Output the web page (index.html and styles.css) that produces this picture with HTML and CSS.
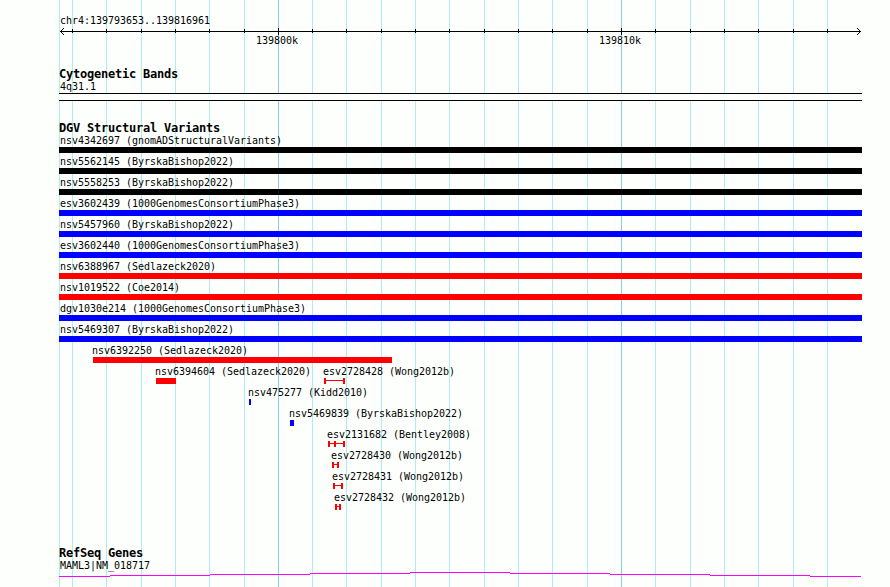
FILE: index.html
```
<!DOCTYPE html>
<html lang="en">
<head>
  <meta charset="utf-8">
  <meta name="viewport" content="width=device-width, initial-scale=1">
  <title>chr4:139793653..139816961</title>
  <link rel="stylesheet" href="styles.css">
</head>
<body>
  <div class="browser">
    <!-- grid lines, one per 1k -->
    <svg class="gridlines" width="803" height="587" shape-rendering="crispEdges">
      <path class="minor" d="M.5 0v587M13.5 0v587M47.5 0v587M82.5 0v587M116.5 0v587M150.5 0v587M185.5 0v587M253.5 0v587M287.5 0v587M322.5 0v587M356.5 0v587M390.5 0v587M425.5 0v587M459.5 0v587M493.5 0v587M528.5 0v587M596.5 0v587M631.5 0v587M665.5 0v587M699.5 0v587M734.5 0v587M768.5 0v587"/>
      <path class="major" d="M219.5 0v587M562.5 0v587"/>
    </svg>

    <div class="ruler">
      <div class="label">chr4:139793653..139816961</div>
      <svg class="axis" width="803" height="8" shape-rendering="crispEdges">
        <path d="M1 4.5h801"/>
        <path d="M13.5 2v4M47.5 2v4M82.5 2v4M116.5 2v4M150.5 2v4M185.5 2v4M253.5 2v4M287.5 2v4M322.5 2v4M356.5 2v4M390.5 2v4M425.5 2v4M459.5 2v4M493.5 2v4M528.5 2v4M596.5 2v4M631.5 2v4M665.5 2v4M699.5 2v4M734.5 2v4M768.5 2v4"/>
        <path d="M219.5 1v7M562.5 1v7"/>
        <path d="M2 3.5h1M3 2.5h1M4 1.5h1M2 5.5h1M3 6.5h1M4 7.5h1"/>
        <path d="M800 3.5h1M799 2.5h1M798 1.5h1M800 5.5h1M799 6.5h1M798 7.5h1"/>
      </svg>
      <div class="lane">
        <div class="feature" style="--start: 196"><div class="label">139800k</div></div>
        <div class="feature" style="--start: 539"><div class="label">139810k</div></div>
      </div>
    </div>

    <section class="track cytobands">
      <h2>Cytogenetic Bands</h2>
      <div class="label">4q31.1</div>
      <div class="band"></div>
    </section>

    <section class="track variants">
      <h2>DGV Structural Variants</h2>
      <div class="lane"><div class="feature"><div class="label">nsv4342697 (gnomADStructuralVariants)</div><div class="bar complex"></div></div></div>
      <div class="lane"><div class="feature"><div class="label">nsv5562145 (ByrskaBishop2022)</div><div class="bar complex"></div></div></div>
      <div class="lane"><div class="feature"><div class="label">nsv5558253 (ByrskaBishop2022)</div><div class="bar complex"></div></div></div>
      <div class="lane"><div class="feature"><div class="label">esv3602439 (1000GenomesConsortiumPhase3)</div><div class="bar gain"></div></div></div>
      <div class="lane"><div class="feature"><div class="label">nsv5457960 (ByrskaBishop2022)</div><div class="bar gain"></div></div></div>
      <div class="lane"><div class="feature"><div class="label">esv3602440 (1000GenomesConsortiumPhase3)</div><div class="bar gain"></div></div></div>
      <div class="lane"><div class="feature"><div class="label">nsv6388967 (Sedlazeck2020)</div><div class="bar loss"></div></div></div>
      <div class="lane"><div class="feature"><div class="label">nsv1019522 (Coe2014)</div><div class="bar loss"></div></div></div>
      <div class="lane"><div class="feature"><div class="label">dgv1030e214 (1000GenomesConsortiumPhase3)</div><div class="bar gain"></div></div></div>
      <div class="lane"><div class="feature"><div class="label">nsv5469307 (ByrskaBishop2022)</div><div class="bar gain"></div></div></div>
      <div class="lane">
        <div class="feature partial" style="--start: 34; --size: 299"><div class="label">nsv6392250 (Sedlazeck2020)</div><div class="bar loss"></div></div>
      </div>
      <div class="lane">
        <div class="feature partial" style="--start: 97; --size: 20"><div class="label">nsv6394604 (Sedlazeck2020)</div><div class="bar loss"></div></div>
        <div class="feature partial" style="--start: 265; --size: 21"><div class="label">esv2728428 (Wong2012b)</div><div class="range"></div></div>
      </div>
      <div class="lane">
        <div class="feature partial" style="--start: 190; --size: 2"><div class="label">nsv475277 (Kidd2010)</div><div class="bar gain"></div></div>
      </div>
      <div class="lane">
        <div class="feature partial" style="--start: 231; --size: 4"><div class="label">nsv5469839 (ByrskaBishop2022)</div><div class="bar gain"></div></div>
      </div>
      <div class="lane">
        <div class="feature partial" style="--start: 269; --size: 17"><div class="label">esv2131682 (Bentley2008)</div><div class="range"><i class="stop"></i></div></div>
      </div>
      <div class="lane">
        <div class="feature partial" style="--start: 273; --size: 7"><div class="label">esv2728430 (Wong2012b)</div><div class="range"></div></div>
      </div>
      <div class="lane">
        <div class="feature partial" style="--start: 274; --size: 10"><div class="label">esv2728431 (Wong2012b)</div><div class="range"></div></div>
      </div>
      <div class="lane">
        <div class="feature partial" style="--start: 276; --size: 6"><div class="label">esv2728432 (Wong2012b)</div><div class="range"></div></div>
      </div>
    </section>

    <section class="track genes">
      <h2>RefSeq Genes</h2>
      <div class="label">MAML3|NM_018717</div>
      <svg class="intron" width="803" height="5" shape-rendering="crispEdges">
        <path d="M0 4.5h51M51 3.5h100M151 2.5h100M251 1.5h100M351 .5h100M451 1.5h100M551 2.5h100M651 3.5h100M751 4.5h51"/>
      </svg>
    </section>
  </div>
</body>
</html>
```

FILE: styles.css
```
*, :after, :before { box-sizing: border-box; }
body {
  background-color: #fdfffc;
  color: #000;
  font-family: "DejaVu Sans Mono", monospace;
  font-size: 10px;
  line-height: 12px;
  margin: 0;
}
.browser {
  height: 587px;
  margin-left: 59px;
  overflow: hidden;
  position: relative;
  width: 803px;
}
svg {
  display: block;
  fill: none;
}
.gridlines {
  left: 0;
  position: absolute;
  top: 0;
  z-index: -1;
}
.minor { stroke: #afeeee; }
.major { stroke: #87ceeb; }

.ruler { padding-top: 15px; }
.axis { stroke: #000; }

.track h2 {
  font-size: 12px;
  font-weight: 700;
  letter-spacing: -.224px;
  line-height: 13px;
  margin: 0;
}
.label {
  height: 12px;
  letter-spacing: -.02px;
  padding-left: 1px;
  white-space: pre;
}
.cytobands { padding-top: 21px; }
.variants { padding-top: 21px; }
.genes { padding-top: 34px; }

.band {
  background: #fdfffc;
  border: solid #000;
  border-width: 1px 0;
  height: 8px;
}

/* features in one lane share a cell and are offset by their start */
.lane { display: grid; }
.variants .lane { height: 21px; }
.feature {
  grid-area: 1 / 1;
  margin-left: calc(var(--start, 0) * 1px);
}
.partial .label {
  margin-left: -2px;
}
.partial .bar, .partial .range { width: calc(var(--size) * 1px); }
.bar { height: 6px; }
.complex { background: #000; }
.gain { background: #00f; }
.loss { background: #f00; }

.range {
  background: linear-gradient(#f00, #f00) 0 2px / 100% 1px no-repeat;
  border: solid #f00;
  border-width: 0 2px;
  height: 6px;
}
.stop {
  background: #f00;
  display: block;
  height: 6px;
  margin-left: 4px;
  width: 2px;
}

.intron { stroke: #f0f; }
```
